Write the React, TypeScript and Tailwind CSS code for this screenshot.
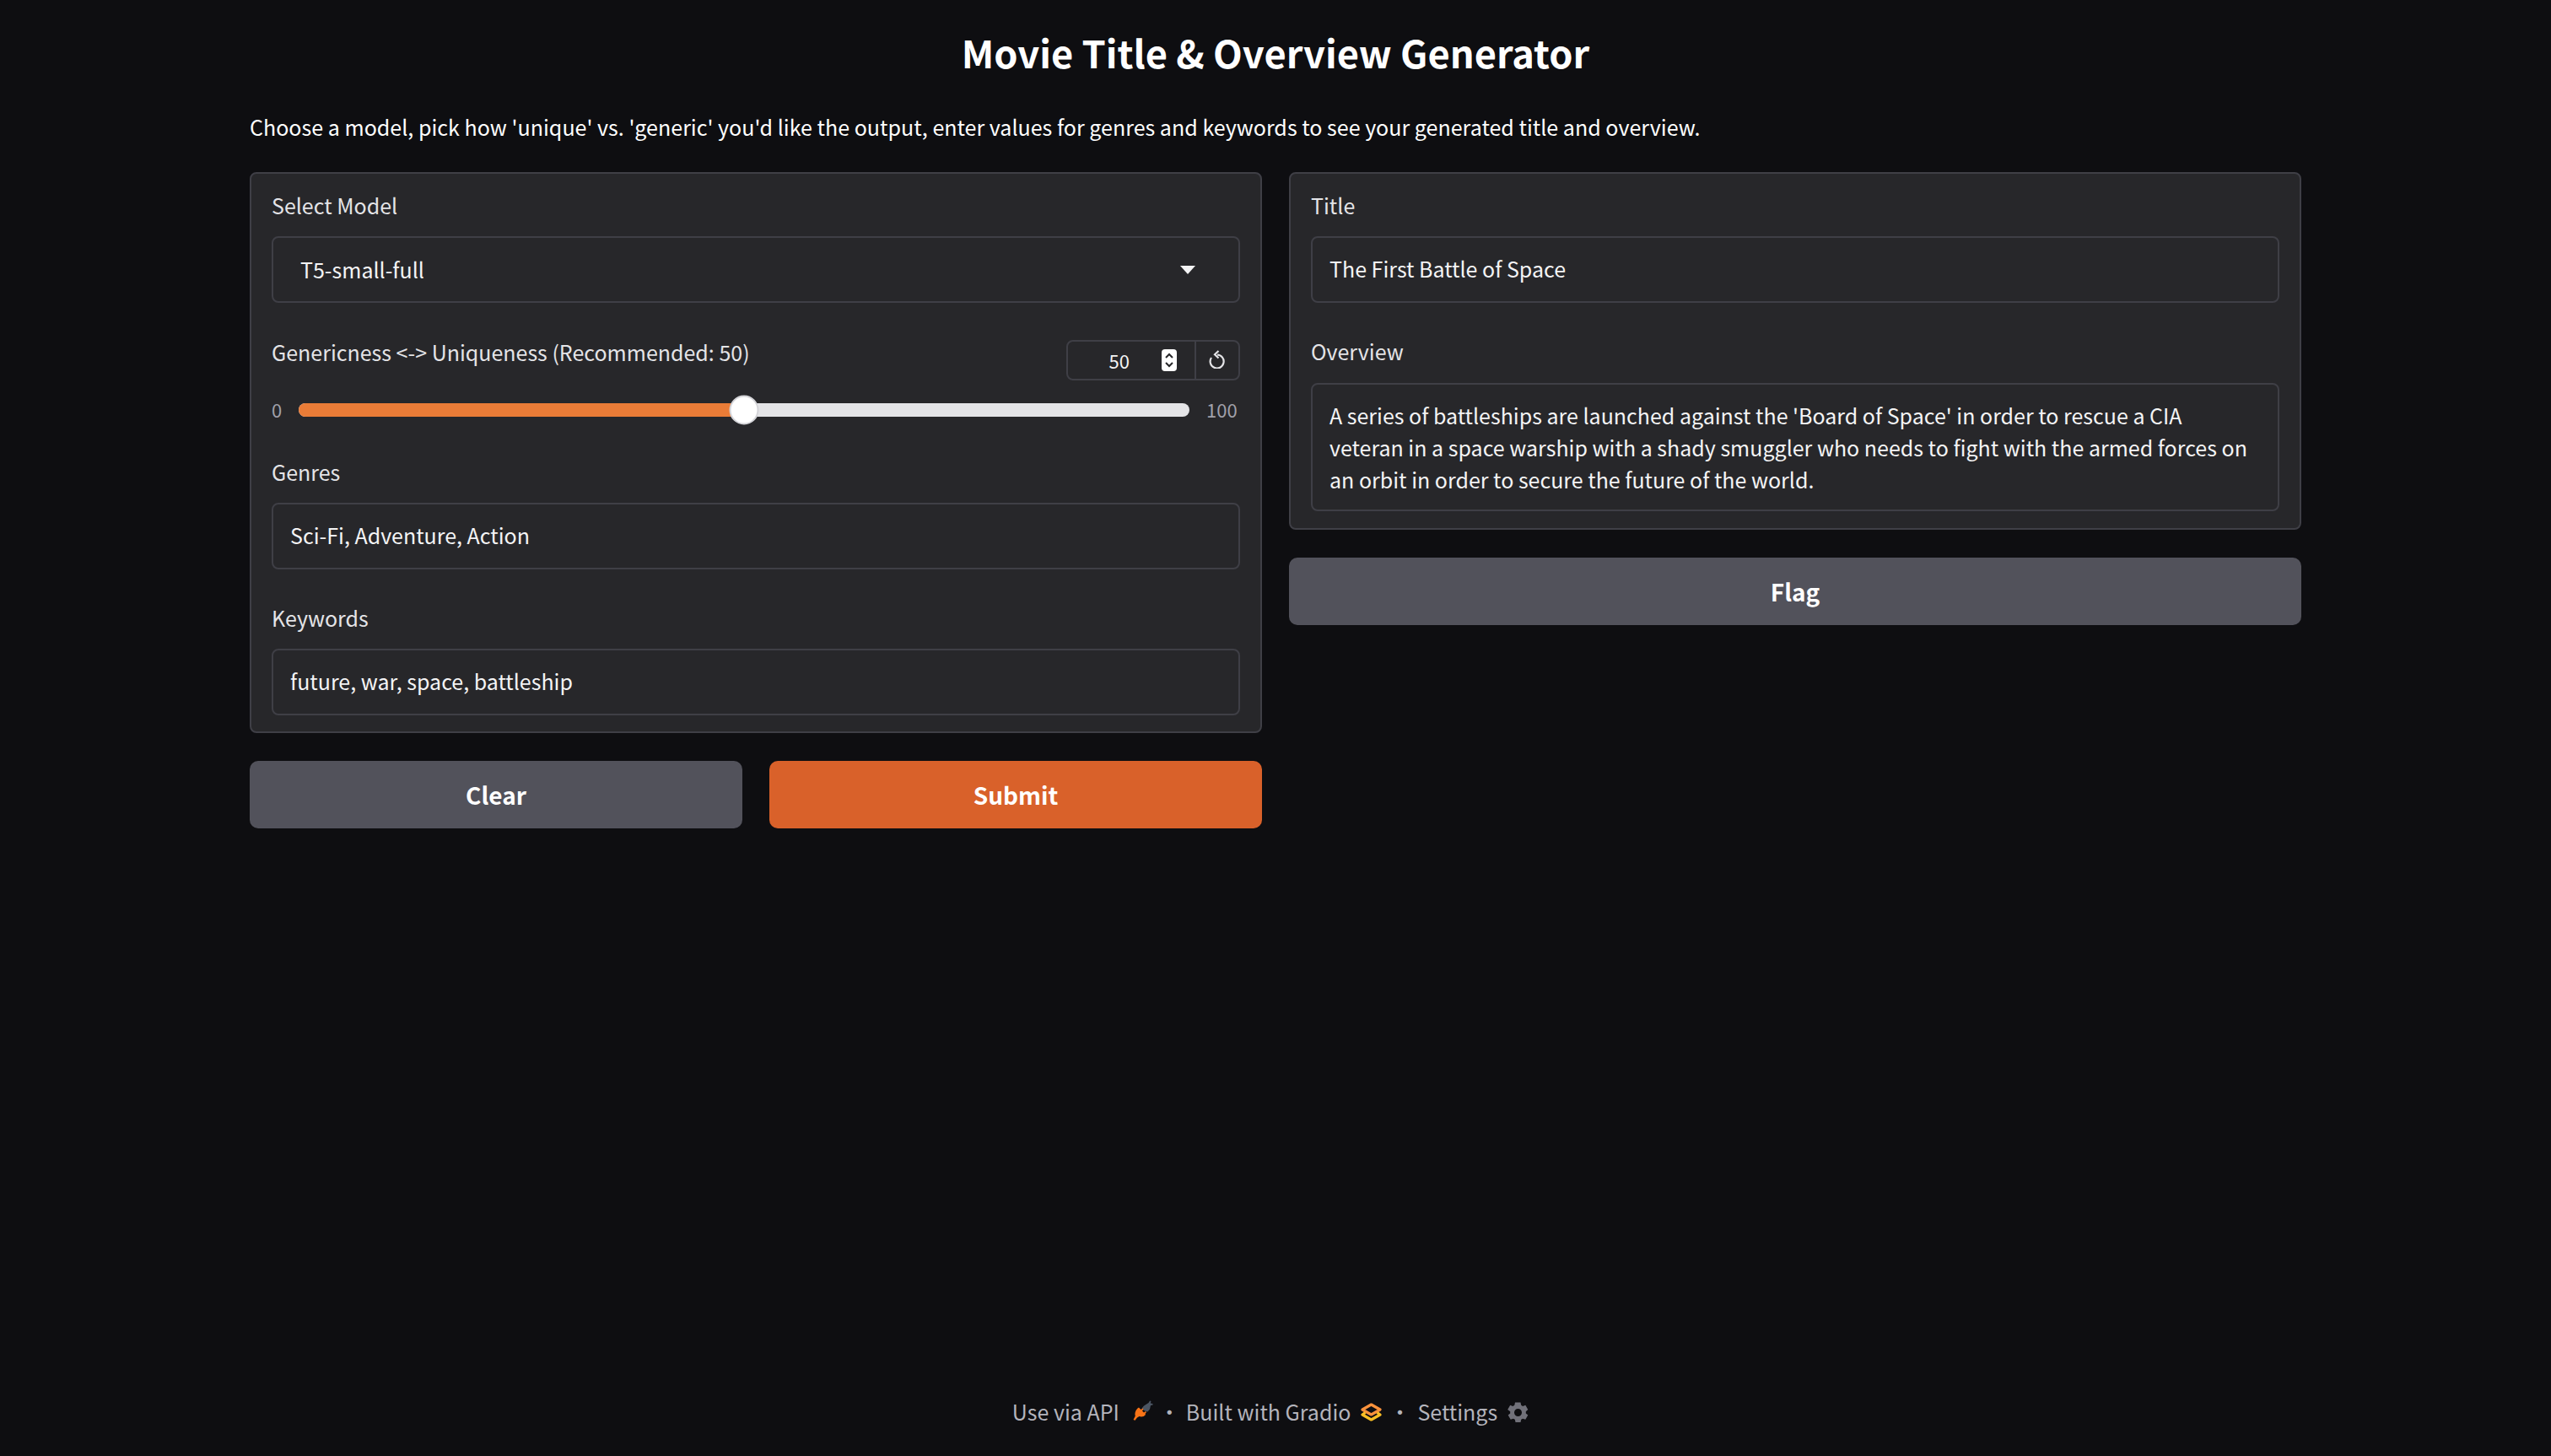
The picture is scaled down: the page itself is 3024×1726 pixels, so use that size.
const sans = "font-['Noto_Sans_CJK_SC','Source_Sans_Pro',sans-serif]";

function Label({ children }: { children: React.ReactNode }) {
	return <div className="text-[25px] leading-[38px] text-[#e4e4e7]">{children}</div>;
}

function Field({ label, value, className = "" }: { label: string; value: string; className?: string }) {
	return (
		<div className={className}>
			<Label>{label}</Label>
			<div className="mt-[18px] flex h-[79px] items-center rounded-[8px] border-2 border-[#3f3f46] bg-[#27272a] px-[20px] pb-[2px] text-[25px] text-[#f4f4f5]">
				{value}
			</div>
		</div>
	);
}

function PlugIcon() {
	return (
		<svg width="24" height="24" viewBox="0 0 24 24" className="block">
			<path d="M13 6.500 L18.500 3 L20 0.500 L21.500 1 L20.800 3.500 L23.500 4 L23.500 5.500 L21 6 L20 10.500 L17.500 13.500 Q13 13 10.500 9.500 Z" fill="#4b5563" />
			<path d="M7 8.500 L9.500 11 L11.500 9.500 L12.500 10.500 L11 12.500 L13 14.500 L15 13 L16 14 L14.500 16 L15 17 C13 19.500 10 20 7.500 19 L5 20.500 L2.500 23.800 L0.500 23 L2.800 18.500 C1.800 15 3.500 10.500 7 8.500 Z" fill="#f97316" />
		</svg>
	);
}

function GradioIcon() {
	return (
		<svg width="25" height="22" viewBox="0 0 25 22" fill="none" strokeWidth="3.200" strokeLinejoin="round" className="block">
			<path d="M12.500 2 L23 8 L12.500 14 L2 8 Z" stroke="#fb923c" />
			<path d="M5.500 11.500 L2 14 L12.500 20 L23 14 L19.500 11.500" stroke="#fbbf24" />
		</svg>
	);
}

function GearIcon() {
	return (
		<svg width="25" height="25" viewBox="0 0 25 25" fill="#71717a" className="block">
			<path
				fillRule="evenodd"
				d="M9.500 0.500h6l.7 3.300 1.900 1.100 3.200-1.100 3 5.200-2.500 2.200v2.200l2.500 2.200-3 5.200-3.200-1.100-1.900 1.100-.7 3.300h-6l-.7-3.300-1.900-1.100-3.200 1.100-3-5.200 2.500-2.200v-2.200L.2 9l3-5.200 3.200 1.100 1.900-1.100.7-3.300Zm3 7.500a4.500 4.500 0 1 0 0 9 4.500 4.500 0 0 0 0-9Z"
			/>
		</svg>
	);
}

export default function App() {
	return (
		<div className={`${sans} flex min-h-[1726px] flex-col bg-[#0e0e11] text-[#f4f4f5]`}>
			<main className="mx-auto w-[2432px] flex-1">
				<h1 className="pt-[28px] text-center text-[45.2px] leading-[68px] font-semibold text-white">Movie Title &amp; Overview Generator</h1>
				<p className="mt-[36px] text-[25.05px] leading-[36px] text-white">
					Choose a model, pick how 'unique' vs. 'generic' you'd like the output, enter values for genres and keywords to see your generated title and overview.
				</p>

				<div className="mt-[36px] grid grid-cols-2 gap-[32px]">
					<div>
						<div className="rounded-[8px] border-2 border-[#3f3f46] bg-[#27272a] px-[24px] pt-[18px] pb-[19px]">
							<Label>Select Model</Label>
							<div className="mt-[18px] flex h-[79px] items-center justify-between rounded-[8px] border-2 border-[#3f3f46] px-[32px] text-[25px] text-[#f4f4f5]">
								<span>T5-small-full</span>
								<span className="mr-[19px] h-0 w-0 border-x-[9px] border-t-[10px] border-x-transparent border-t-[#f4f4f5]" />
							</div>

							<div className="mt-[44px] flex items-start justify-between">
								<div className="-mt-[5px]">
									<Label>Genericness &lt;-&gt; Uniqueness (Recommended: 50)</Label>
								</div>
								<div className="flex h-[48px] w-[206px] items-center rounded-[8px] border-2 border-[#3f3f46] text-[22px]">
									<div className="flex w-[150px] items-center justify-end">
										<span className="mr-[38px]">50</span>
										<span className="mr-[21px] flex h-[26px] w-[18px] flex-col items-center justify-center rounded-[4px] bg-white">
											<svg width="12" height="10" viewBox="0 0 12 10" fill="none" stroke="#27272a" strokeWidth="2"><path d="M2 7l4-4 4 4" /></svg>
											<svg width="12" height="10" viewBox="0 0 12 10" fill="none" stroke="#27272a" strokeWidth="2"><path d="M2 3l4 4 4-4" /></svg>
										</span>
									</div>
									<div className="flex h-full flex-1 items-center justify-center border-l-2 border-[#3f3f46]">
										<svg width="20" height="22" viewBox="0 0 20 22" fill="none" stroke="#e4e4e7" strokeWidth="2.200" className="-mt-[2px]">
											<path d="M3 9a8 8 0 1 0 7-3.500" />
											<path d="M11.500 1 7 5.200l4.500 4.300" />
										</svg>
									</div>
								</div>
							</div>

							<div className="mt-[17px] flex h-[35px] items-center">
								<span className="w-[32px] text-[22px] text-[#a1a1aa]">0</span>
								<div className="relative h-[16px] w-[1056px] rounded-full bg-[#e4e4e7]">
									<div className="h-full w-1/2 rounded-full bg-[#ea7c37]" />
									<div className="absolute top-1/2 left-1/2 h-[35px] w-[35px] -translate-x-1/2 -translate-y-1/2 rounded-full border-2 border-[#d4d4d8] bg-white" />
								</div>
								<span className="ml-[20px] text-[22px] text-[#a1a1aa]">100</span>
							</div>

							<Field label="Genres" value="Sci-Fi, Adventure, Action" className="mt-[37px]" />
							<Field label="Keywords" value="future, war, space, battleship" className="mt-[38px]" />
						</div>

						<div className="mt-[33px] grid grid-cols-2 gap-[32px]">
							<button className="h-[80px] rounded-[10px] bg-[#52525b] text-[28px] font-semibold text-white">Clear</button>
							<button className="h-[80px] rounded-[10px] bg-[#d9612a] text-[28px] font-semibold text-white">Submit</button>
						</div>
					</div>

					<div>
						<div className="rounded-[8px] border-2 border-[#3f3f46] bg-[#27272a] px-[24px] pt-[18px] pb-[20px]">
							<Label>Title</Label>
							<div className="mt-[18px] flex h-[79px] items-center rounded-[8px] border-2 border-[#3f3f46] px-[20px] pb-[2px] text-[25px] text-[#f4f4f5]">
								The First Battle of Space
							</div>
							<div className="mt-[38px]">
								<Label>Overview</Label>
								<div className="mt-[19px] rounded-[8px] border-2 border-[#3f3f46] py-[17px] pr-[32px] pl-[20px] text-[25px] leading-[38px] text-[#f4f4f5]">
									A series of battleships are launched against the 'Board of Space' in order to rescue a CIA veteran in a space warship with a shady smuggler who needs to fight with the armed forces on an orbit in order to secure the future of the world.
								</div>
							</div>
						</div>
						<button className="mt-[33px] h-[80px] w-full rounded-[10px] bg-[#52525b] text-[28px] font-semibold text-white">Flag</button>
					</div>
				</div>
			</main>

			<footer className="flex h-[71px] items-start justify-center pr-[12px] text-[25px] leading-[36px] text-[#b4b4bc]">
				<span>Use via API</span>
				<span className="mt-[5px] ml-[16px]"><PlugIcon /></span>
				<span className="w-[39px] text-center">·</span>
				<span>Built with Gradio</span>
				<span className="mt-[8px] ml-[12px]"><GradioIcon /></span>
				<span className="w-[42px] text-center">·</span>
				<span>Settings</span>
				<span className="mt-[7px] ml-[12px]"><GearIcon /></span>
			</footer>
		</div>
	);
}
